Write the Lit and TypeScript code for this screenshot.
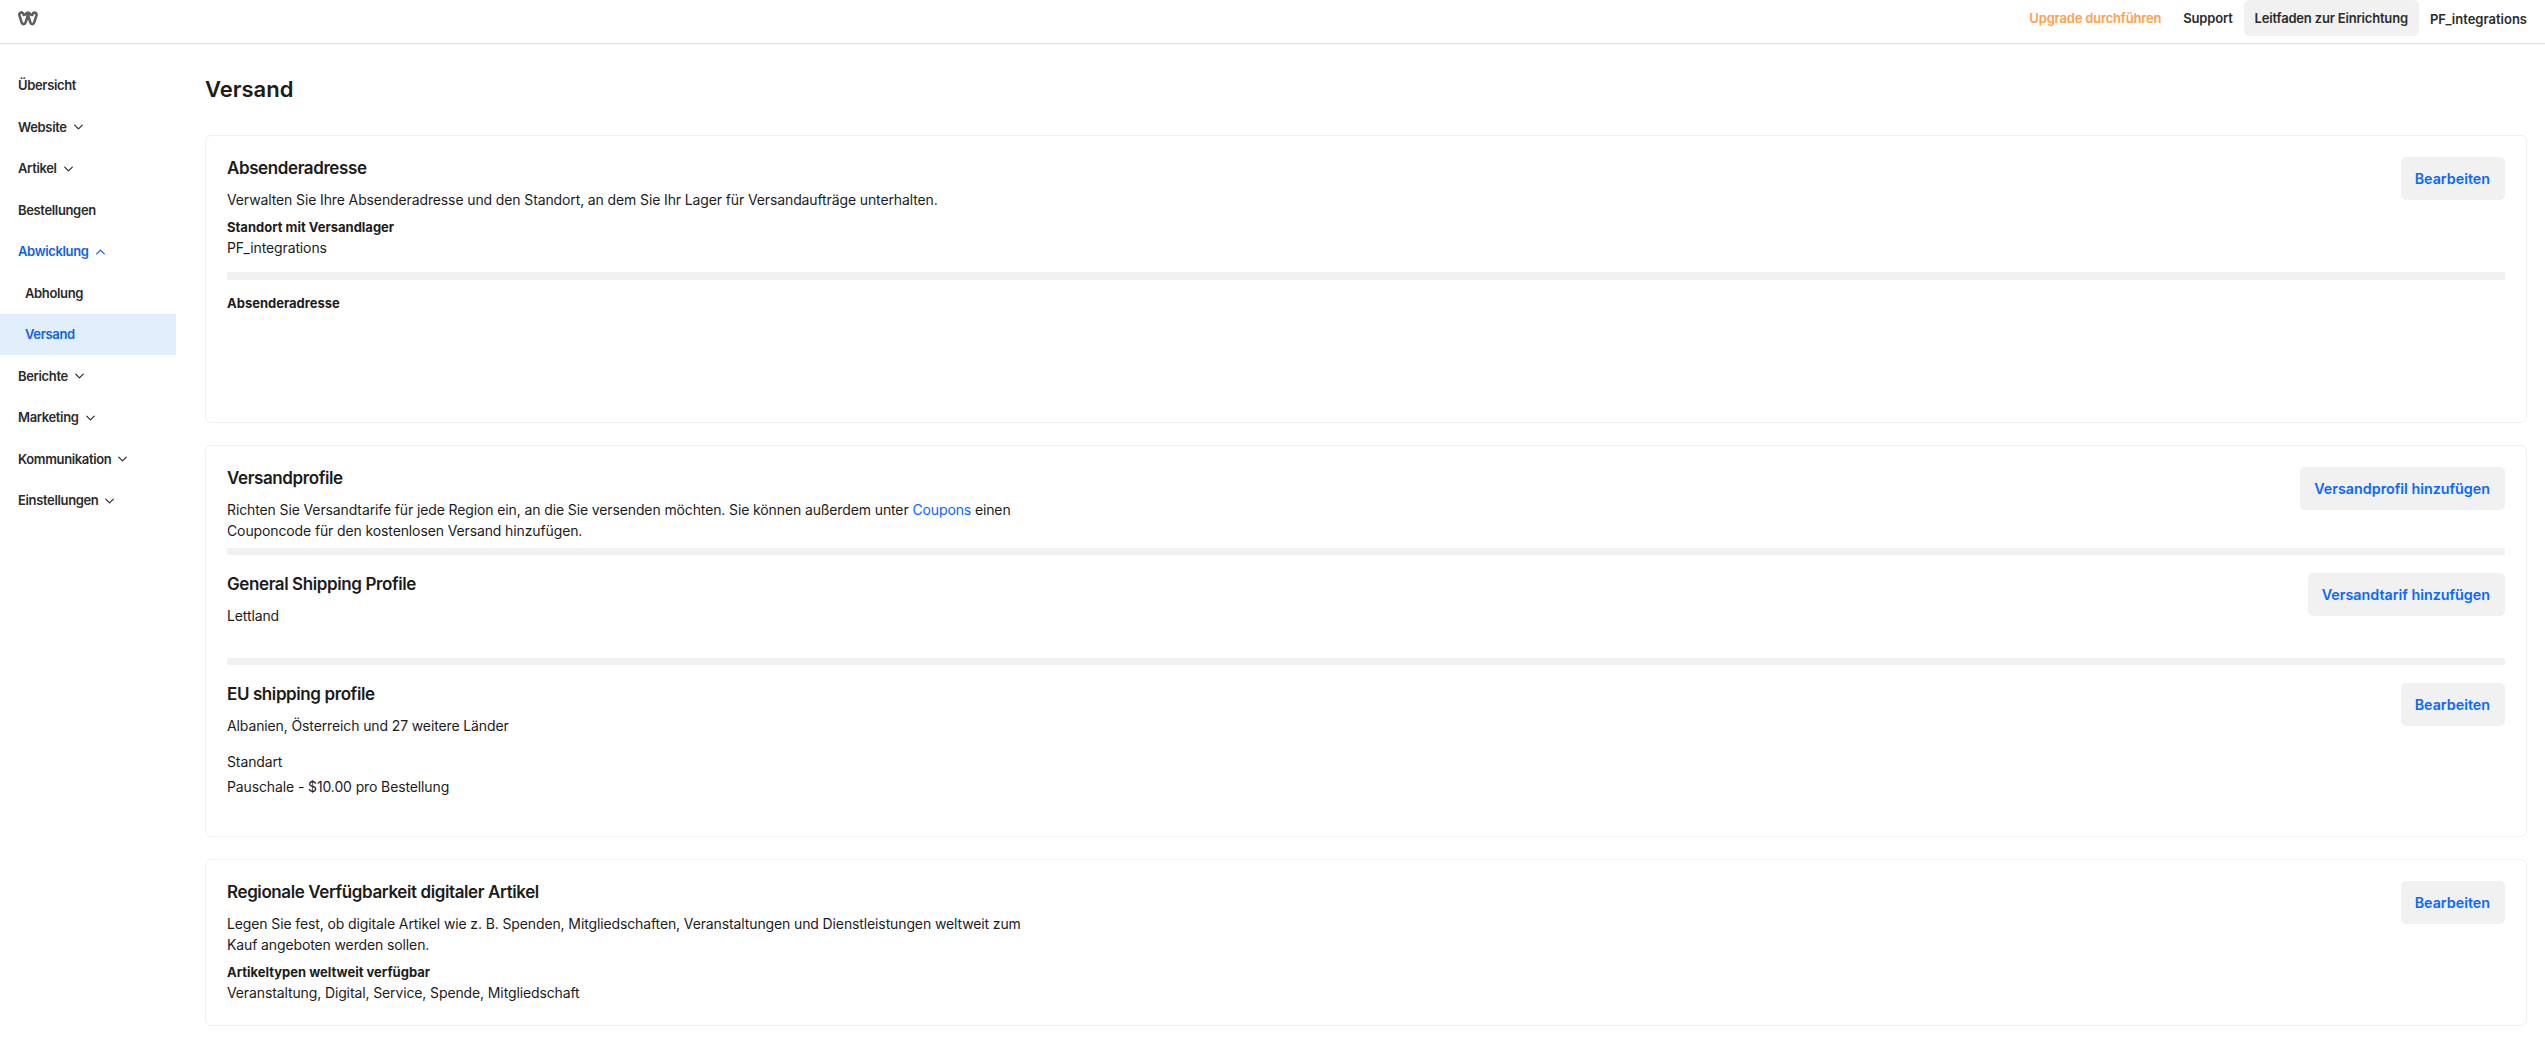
import { LitElement, html, css, svg } from "lit";
import { customElement } from "lit/decorators.js";

const chevron = (up = false) => html`<svg class="chev" width="9" height="6" viewBox="0 0 9 6" fill="none" stroke="currentColor" stroke-width="1.2" stroke-linecap="round" stroke-linejoin="round">${up ? svg`<path d="M.7 4.900 4.500 1.100l3.800 3.800"/>` : svg`<path d="M.7 1.100 4.500 4.900l3.800-3.800"/>`}</svg>`;

@customElement("app-root")
export class AppRoot extends LitElement {
  static styles = css`
    :host { display: block; height: 1064px; overflow: hidden; background: #fff; color: #1c1c1c; font-family: Inter, "Liberation Sans", sans-serif; font-size: 14px; letter-spacing: -.12px; }
    * { box-sizing: border-box; }
    header { height: 44px; display: flex; align-items: flex-start; justify-content: space-between; border-bottom: 1px solid #e4e4e4; box-shadow: 0 1px 1px rgba(0,0,0,.04); padding: 0 18px 0 18px; }
    .logo { margin-top: 11px; display: block; }
    .top { display: flex; align-items: flex-start; font-size: 13px; font-weight: 600; color: #2b2b2b; letter-spacing: -.18px; }
    .top > span { line-height: 36px; }
    .upgrade { color: #ffa04d; margin-right: 22px; }
    .setup { background: #f1f1f1; border-radius: 5px; padding: 0 11px; margin: 0 11px; }
    .account { line-height: 38px !important; letter-spacing: 0; }
    .body { display: flex; }
    nav { width: 176px; flex: none; padding-top: 20.5px; font-size: 13px; font-weight: 600; color: #2b2b2b; letter-spacing: -.35px; }
    .item { height: 41.5px; display: flex; align-items: center; gap: 7px; padding-left: 18px; }
    .chev { flex: none; margin-top: 1px; }
    .sub { padding-left: 25px; }
    .blue { color: #0d63e6; }
    .active { background: #e1eefc; }
    main { flex: 1; min-width: 0; padding: 0 18px 0 29px; }
    h1 { margin: 0; height: 91px; padding-top: 30px; font-size: 22px; line-height: 30px; font-weight: 600; color: #1c1c1c; letter-spacing: 0; }
    .card { border: 1px solid #f0f0f0; border-radius: 6px; padding: 21px 21px 0 21px; margin-bottom: 22px; }
    .c1 { height: 288px; }
    .c2 { height: 392px; }
    .c3 { height: 167px; margin-bottom: 0; }
    .row { display: flex; justify-content: space-between; align-items: flex-start; }
    h2 { margin: 0; font-size: 17px; line-height: 22px; font-weight: 600; letter-spacing: -.4px; }
    p { margin: 0; line-height: 21px; }
    .desc { max-width: 800px; margin-top: 10px; }
    .label { font-size: 13px; font-weight: 700; line-height: 20px; letter-spacing: 0; margin-top: 7px; }
    .btn { flex: none; height: 43px; line-height: 43px; padding: 0 15px 0 14px; background: #f1f1f1; border-radius: 5px; color: #0a68ff; font-size: 14.3px; font-weight: 600; letter-spacing: 0; }
    .rule { height: 7px; margin-top: 7px; background: #f1f1f1; border-radius: 1px; }
    .rule-tall { height: 8px; margin-top: 14px; }
    .rule-lower { margin-top: 17px; }
    .label-after { margin-top: 13px; }
    .tier { margin-top: 18px; }
    .tier-short { height: 68px; }
    .rate { margin-top: 15px; }
    .price { margin-top: 4px; }
    a { color: #0a68ff; text-decoration: none; }
  `;

  private nav(label: string, chev?: "up" | "down", cls = "") {
    return html`<div class="item ${cls}">${label}${chev ? chevron(chev === "up") : ""}</div>`;
  }

  render() {
    return html`
      <header>
        <svg class="logo" width="20" height="15" viewBox="0 0 20 15" fill="none" stroke="#5f5f5f" stroke-width="2.6" stroke-linejoin="round" stroke-linecap="round"><path d="M3.2 1.6C1.6 1.6 1 3 1.5 4.6l2.2 7c.7 2.1 3.2 2 3.8 0L10 4l2.4 7.6c.6 2 3.1 2.1 3.8 0l2.2-7c.5-1.6-.1-3-1.7-3-1.4 0-2 .8-2.5 2.4"/><path d="M3.2 1.6C4.6 1.6 5.4 2.4 5.900 4M7.600 3.600c.5-1.300 1.300-2 2.400-2s1.900.7 2.400 2"/></svg>
        <div class="top">
          <span class="upgrade">Upgrade durchführen</span>
          <span>Support</span>
          <span class="setup">Leitfaden zur Einrichtung</span>
          <span class="account">PF_integrations</span>
        </div>
      </header>
      <div class="body">
        <nav>
          ${this.nav("Übersicht")}
          ${this.nav("Website", "down")}
          ${this.nav("Artikel", "down")}
          ${this.nav("Bestellungen")}
          ${this.nav("Abwicklung", "up", "blue")}
          ${this.nav("Abholung", undefined, "sub")}
          ${this.nav("Versand", undefined, "sub blue active")}
          ${this.nav("Berichte", "down")}
          ${this.nav("Marketing", "down")}
          ${this.nav("Kommunikation", "down")}
          ${this.nav("Einstellungen", "down")}
        </nav>
        <main>
          <h1>Versand</h1>
          <section class="card c1">
            <div class="row">
              <div>
                <h2>Absenderadresse</h2>
                <p class="desc">Verwalten Sie Ihre Absenderadresse und den Standort, an dem Sie Ihr Lager für Versandaufträge unterhalten.</p>
                <div class="label">Standort mit Versandlager</div>
                <p>PF_integrations</p>
              </div>
              <div class="btn">Bearbeiten</div>
            </div>
            <div class="rule rule-tall"></div>
            <div class="label label-after">Absenderadresse</div>
          </section>
          <section class="card c2">
            <div class="row">
              <div>
                <h2>Versandprofile</h2>
                <p class="desc">Richten Sie Versandtarife für jede Region ein, an die Sie versenden möchten. Sie können außerdem unter <a>Coupons</a> einen Couponcode für den kostenlosen Versand hinzufügen.</p>
              </div>
              <div class="btn">Versandprofil hinzufügen</div>
            </div>
            <div class="rule"></div>
            <div class="row tier tier-short">
              <div>
                <h2>General Shipping Profile</h2>
                <p class="desc">Lettland</p>
              </div>
              <div class="btn">Versandtarif hinzufügen</div>
            </div>
            <div class="rule rule-lower"></div>
            <div class="row tier">
              <div>
                <h2>EU shipping profile</h2>
                <p class="desc">Albanien, Österreich und 27 weitere Länder</p>
                <p class="rate">Standart</p>
                <p class="price">Pauschale - $10.00 pro Bestellung</p>
              </div>
              <div class="btn">Bearbeiten</div>
            </div>
          </section>
          <section class="card c3">
            <div class="row">
              <div>
                <h2>Regionale Verfügbarkeit digitaler Artikel</h2>
                <p class="desc">Legen Sie fest, ob digitale Artikel wie z. B. Spenden, Mitgliedschaften, Veranstaltungen und Dienstleistungen weltweit zum Kauf angeboten werden sollen.</p>
                <div class="label">Artikeltypen weltweit verfügbar</div>
                <p>Veranstaltung, Digital, Service, Spende, Mitgliedschaft</p>
              </div>
              <div class="btn">Bearbeiten</div>
            </div>
          </section>
        </main>
      </div>
    `;
  }
}
